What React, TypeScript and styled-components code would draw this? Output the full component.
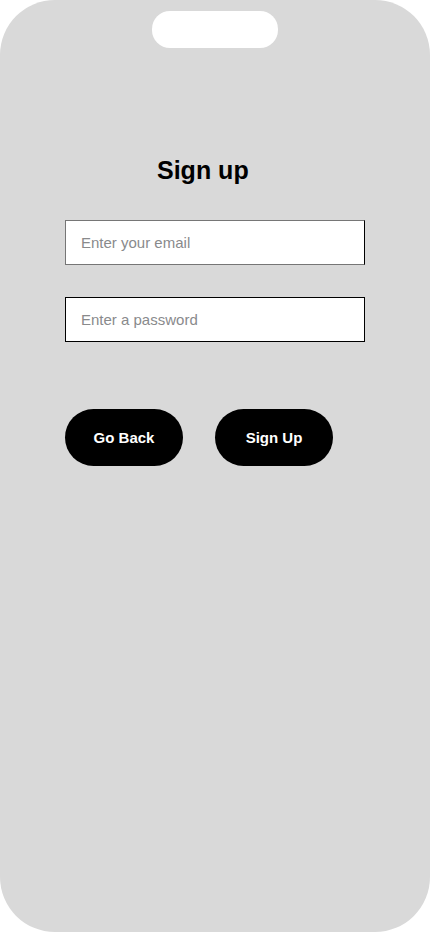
import React from "react";
import styled, { createGlobalStyle } from "styled-components";

const Global = createGlobalStyle`
  html, body { margin: 0; padding: 0; background: #ffffff; }
  * { box-sizing: border-box; }
  body { font-family: "Liberation Sans", Arial, sans-serif; }
`;

const Phone = styled.div`
  width: 430px;
  height: 932px;
  background: #d9d9d9;
  border-radius: 55px;
  display: flex;
  flex-direction: column;
  align-items: center;
  overflow: hidden;
`;

const Notch = styled.div`
  margin-top: 11px;
  width: 126px;
  height: 37px;
  border-radius: 18px;
  background: #ffffff;
`;

const Form = styled.div`
  width: 100%;
  padding: 0 65px;
  display: flex;
  flex-direction: column;
`;

const Title = styled.h1`
  margin: 108px 0 36px 92px;
  font-size: 25px;
  line-height: 28px;
  font-weight: 700;
  color: #000;
`;

const Field = styled.input<{ $soft?: boolean }>`
  width: 300px;
  height: 45px;
  margin: 0 0 32px 0;
  padding: 0 15px;
  border: 1px solid #000;
  border-color: ${(p) => (p.$soft ? "#767676 #000 #767676 #767676" : "#000")};
  background: #fff;
  font-family: "Liberation Sans", Arial, sans-serif;
  font-size: 15px;
  color: #000;
  outline: none;
  &::placeholder { color: #898a8c; }
`;

const Actions = styled.div`
  margin-top: 35px;
  display: flex;
  gap: 32px;
`;

const Pill = styled.button`
  width: 118px;
  height: 57px;
  border: none;
  border-radius: 29px;
  background: #000;
  color: #fff;
  font-family: "Liberation Sans", Arial, sans-serif;
  font-size: 15px;
  font-weight: 700;
  cursor: pointer;
`;

export default function App() {
  return (
    <>
      <Global />
      <Phone>
        <Notch />
        <Form>
          <Title>Sign up</Title>
          <Field $soft type="email" placeholder="Enter your email" />
          <Field type="password" placeholder="Enter a password" />
          <Actions>
            <Pill>Go Back</Pill>
            <Pill>Sign Up</Pill>
          </Actions>
        </Form>
      </Phone>
    </>
  );
}
